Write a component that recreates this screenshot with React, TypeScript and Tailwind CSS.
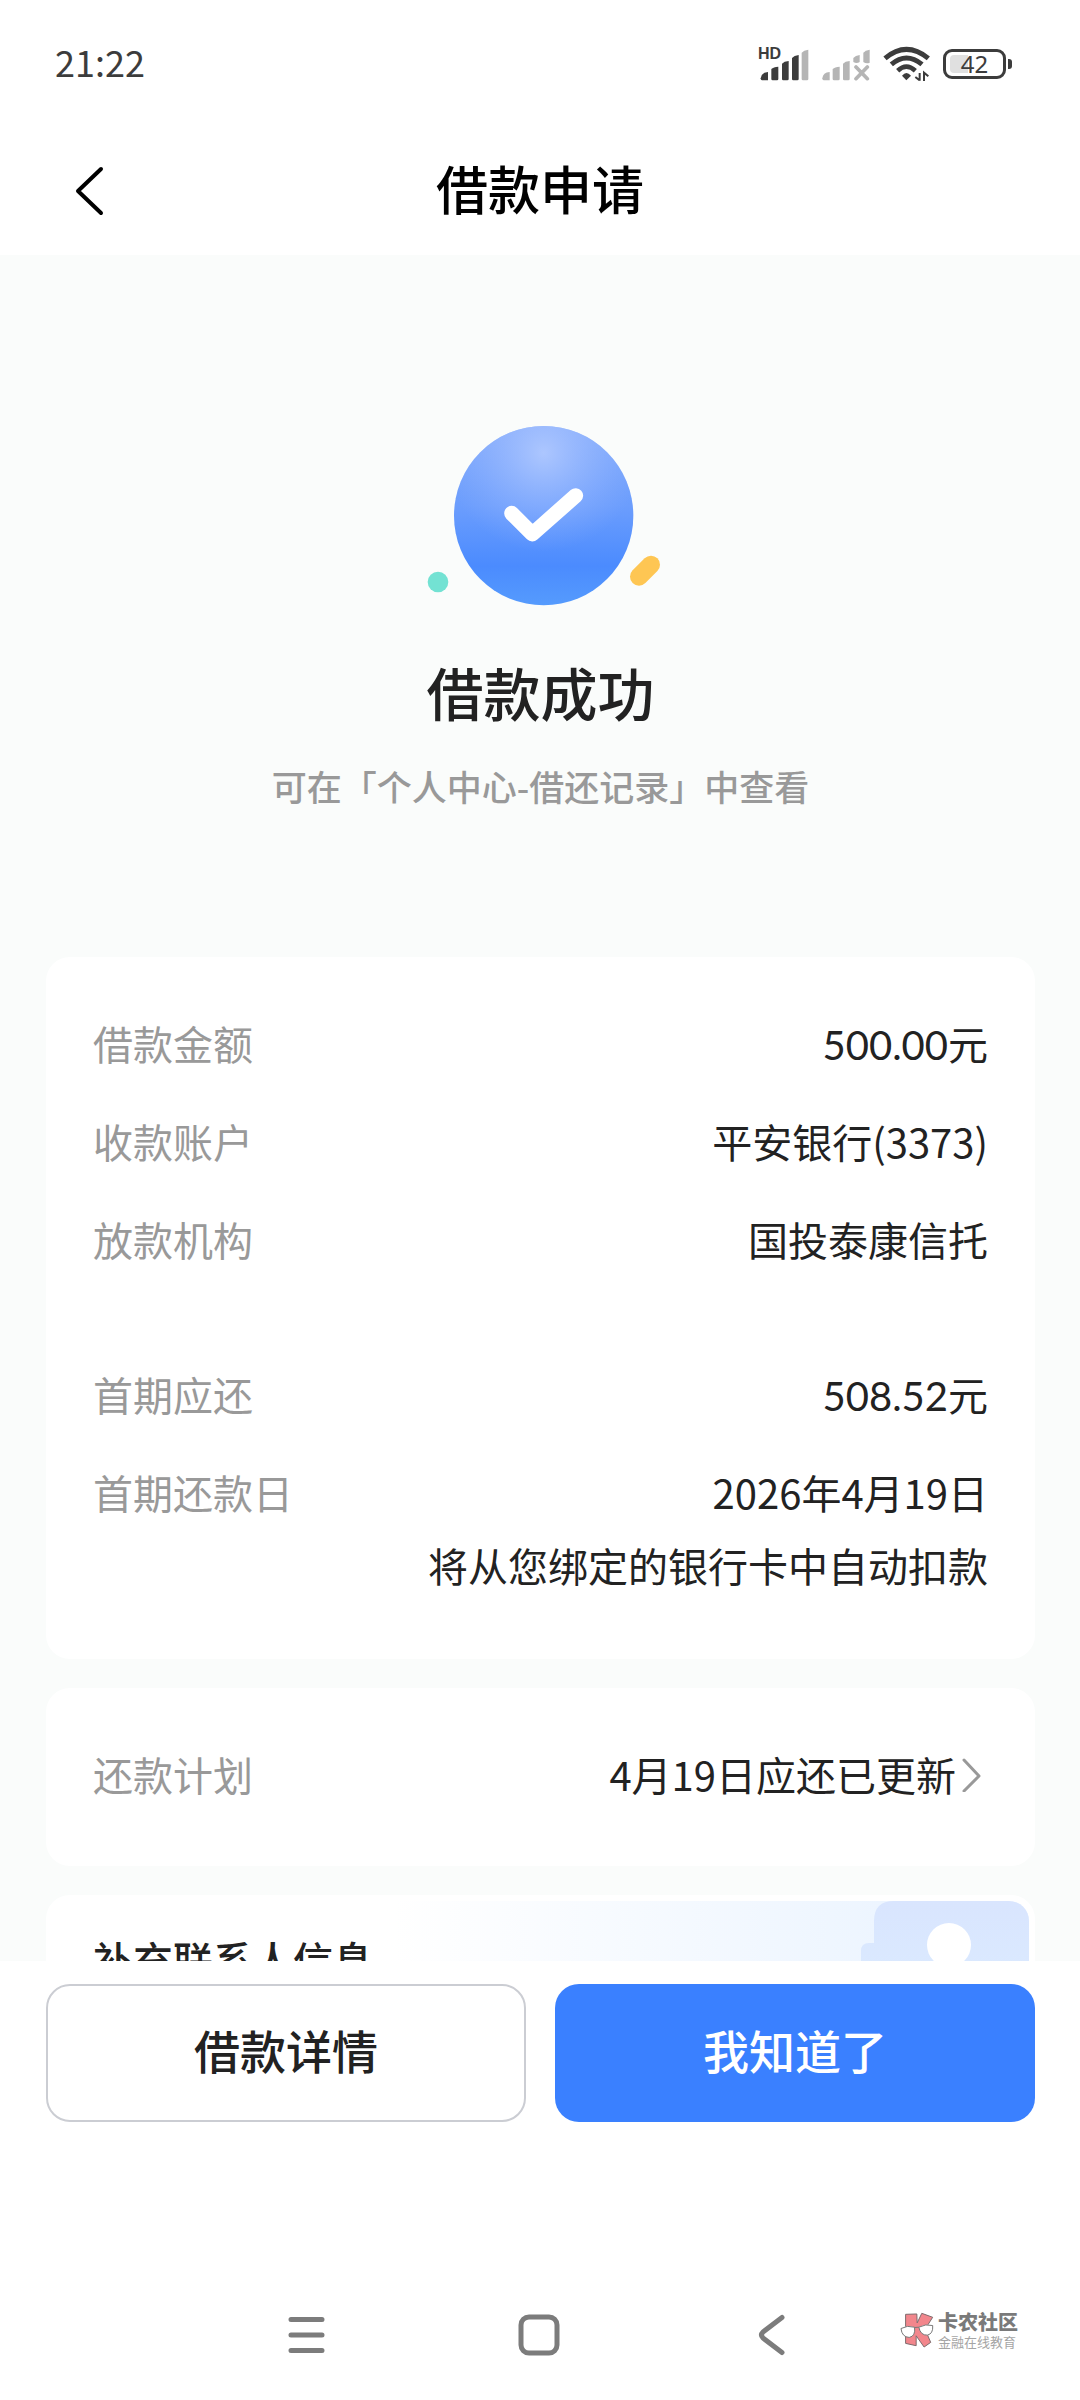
import React from "react";

function SignalIcon() {
  return (
    <div className="relative h-[34px] w-[52px] text-[#3c3c3c]">
      <span className="absolute top-0 left-0 font-['Liberation_Sans'] text-[16px] leading-[14px] font-bold">HD</span>
      <svg viewBox="56 47 156 102" className="h-[34px] w-[52px]" fill="currentColor" aria-hidden="true">
        <path d="M64 141 Q66 123 86 122 V147 H68 Q64 147 64 141Z" />
        <path d="M96 113 Q102 107 117 106 V143 Q117 147 113 147 H100 Q96 147 96 143Z" />
        <path d="M128 97 Q134 90 148 89 V143 Q148 147 144 147 H132 Q128 147 128 143Z" />
        <path d="M158 80 Q164 73 178 71 V143 Q178 147 174 147 H162 Q158 147 158 143Z" />
        <path fill="#b5b5b5" d="M187 64 Q193 57 207 55 V143 Q207 147 203 147 H191 Q187 147 187 143Z" />
      </svg>
    </div>
  );
}

function NoSignalIcon() {
  return (
    <svg viewBox="243 47 147 102" className="h-[34px] w-[49px]" fill="#b5b5b5" aria-hidden="true">
      <path d="M244 141 Q246 123 266 122 V147 H248 Q244 147 244 141Z" />
      <path d="M275 113 Q281 107 296 106 V143 Q296 147 292 147 H279 Q275 147 275 143Z" />
      <path d="M306 97 Q312 90 326 89 V143 Q326 147 322 147 H310 Q306 147 306 143Z" />
      <path d="M337 80 Q343 73 356 71 V92 Q347 98 337 92Z" />
      <path d="M367 64 Q373 57 386 55 V94 Q376 99 367 92Z" />
      <path d="M345 107 L379 142 M379 107 L345 142" stroke="#b5b5b5" strokeWidth="11" strokeLinecap="round" />
    </svg>
  );
}

function WifiIcon() {
  return (
    <svg viewBox="424 47 144 105" className="h-[35px] w-[48px]" fill="none" stroke="#3c3c3c" aria-hidden="true">
      <path d="M430 84 Q494 30 560 84" strokeWidth="15" />
      <path d="M449 102 Q494 64 541 102" strokeWidth="15" />
      <path d="M468 121 Q494 97 521 121" strokeWidth="14" />
      <path d="M481 136 Q494 120 508 136 L494 150Z" fill="#3c3c3c" stroke="none" />
      <path d="M534 128 V151 M521 140 L534 150 M547 153 V127 L560 138" strokeWidth="6" />
    </svg>
  );
}

function BatteryIcon() {
  return (
    <div className="flex items-center gap-[2px]">
      <div className="relative flex h-[30px] w-[63px] items-center justify-center rounded-[9px] border-[3px] border-[#3c3c3c]">
        <span className="absolute inset-y-[3px] left-[4px] w-[18px] rounded-l-[4px] bg-[#e0e0e0]" />
        <span className="relative font-['Noto_Sans'] text-[24px] leading-[24px] text-[#3c3c3c]">42</span>
      </div>
      <span className="h-[10px] w-[4px] rounded-r-[3px] bg-[#3c3c3c]" />
    </div>
  );
}

function SuccessArt() {
  return (
    <svg viewBox="-27 0 900 690" className="h-[230px] w-[300px]" role="img" aria-label="成功">
      <defs>
        <linearGradient id="ball" x1="0" y1="0" x2="0" y2="1">
          <stop offset="0" stopColor="#84abfb" />
          <stop offset="0.45" stopColor="#6b9dfd" />
          <stop offset="0.78" stopColor="#4b8bfe" />
          <stop offset="1" stopColor="#559bfd" />
        </linearGradient>
        <radialGradient id="shine" cx="0.5" cy="0.15" r="0.55">
          <stop offset="0" stopColor="#b2caff" stopOpacity="0.9" />
          <stop offset="1" stopColor="#8fb2ff" stopOpacity="0" />
        </radialGradient>
      </defs>
      <circle cx="431" cy="347" r="269" fill="url(#ball)" />
      <circle cx="431" cy="347" r="269" fill="url(#shine)" />
      <path d="M335 340 L397 402 L527 287" fill="none" stroke="#fff" strokeWidth="45" strokeLinecap="round" strokeLinejoin="round" />
      <circle cx="114" cy="546" r="31" fill="#73e2d3" />
      <path d="M717 530 L753 494" stroke="#fec653" strokeWidth="54" strokeLinecap="round" />
    </svg>
  );
}

function Row({ label, value, amount = false }: { label: string; value: string; amount?: boolean }) {
  return (
    <div className="flex h-[60px] items-baseline justify-between">
      <dt className="text-[#999]">{label}</dt>
      <dd className={amount ? "font-['Lato','Noto_Sans_CJK_SC',sans-serif]" : undefined}>{value}</dd>
    </div>
  );
}

function Watermark() {
  return (
    <div className="absolute top-10 right-[62px] flex items-center gap-[4px]">
      <svg viewBox="58 66 104 112" className="h-[37px] w-[35px]" aria-hidden="true">
        <path
          d="M77 73 L111 72 L112 99 L126 70 L159 82 L136 118 L153 158 L133 172 L109 138 V168 L77 161Z"
          fill="#f2868c"
          stroke="#7c6a6c"
          strokeWidth="3"
          strokeLinejoin="round"
        />
        <g fill="#fff" stroke="#777" strokeWidth="3">
          <path d="M63 116 Q82 105 104 112 Q108 139 88 143 Q66 142 63 116Z" />
          <path d="M117 112 Q138 101 159 107 Q161 132 143 136 Q122 137 117 112Z" />
          <path d="M104 113 L117 112" />
        </g>
      </svg>
      <div className="whitespace-nowrap">
        <div className="text-[20px] leading-[24px] font-black text-[#7a7a7a]">卡农社区</div>
        <div className="text-[13px] leading-[16px] text-[#a5a5a5]">金融在线教育</div>
      </div>
    </div>
  );
}

export default function App() {
  return (
    <div className="flex h-screen flex-col bg-white font-['Noto_Sans_CJK_SC',sans-serif] text-[#222]">
      <div className="flex h-[127px] shrink-0 items-center justify-between pr-[68px] pl-[55px]">
        <span className="pb-1.5 text-[36px] leading-[40px] text-[#3c3c3c]">21:22</span>
        <div className="flex items-center gap-[12px]">
          <SignalIcon />
          <NoSignalIcon />
          <WifiIcon />
          <BatteryIcon />
        </div>
      </div>

      <header className="grid h-32 shrink-0 grid-cols-[1fr_auto_1fr] items-center px-16">
        <button type="button" aria-label="返回" className="w-12">
          <svg viewBox="0 0 48 52" className="h-[52px] w-12" fill="none" stroke="#000" strokeWidth="4" strokeLinecap="round" strokeLinejoin="round">
            <path d="M37 4 L14 26 L37 48" />
          </svg>
        </button>
        <h1 className="pb-1.5 text-[52px] leading-[60px] font-medium text-black">借款申请</h1>
      </header>

      <main className="min-h-0 flex-1 overflow-y-auto bg-[#fafcfb] pr-[45px] pl-[46px] [scrollbar-width:none]">
        <section className="flex flex-col items-center pt-[145px]">
          <SuccessArt />
          <h2 className="mt-[21px] text-[57px] leading-[80px] font-medium">借款成功</h2>
          <p className="mt-[30px] text-[35px] leading-[50px] font-medium text-[#999]">可在「个人中心-借还记录」中查看</p>
        </section>

        <div className="mt-[146px] flex flex-col gap-[29px] text-[40px] leading-[60px]">
          <section className="rounded-[24px] bg-white px-[47px] pt-14 pb-16">
            <dl className="flex flex-col gap-[38px]">
              <Row label="借款金额" value="500.00元" amount />
              <Row label="收款账户" value="平安银行(3373)" />
              <Row label="放款机构" value="国投泰康信托" />
            </dl>
            <dl className="mt-[95px] flex flex-col gap-[38px]">
              <Row label="首期应还" value="508.52元" amount />
              <Row label="首期还款日" value="2026年4月19日" />
            </dl>
            <p className="mt-[13px] text-right">将从您绑定的银行卡中自动扣款</p>
          </section>

          <button type="button" className="flex items-center justify-between rounded-[24px] bg-white px-[47px] pt-14 pb-[62px]">
            <span className="text-[#999]">还款计划</span>
            <span className="flex items-center gap-1">
              4月19日应还已更新
              <svg viewBox="0 0 28 36" className="h-9 w-7" fill="none" stroke="#999" strokeWidth="3" strokeLinecap="round" strokeLinejoin="round">
                <path d="M4 4 L19 20 L4 35" />
              </svg>
            </span>
          </button>

          <section className="rounded-[24px] bg-white p-[6px]">
            <div className="flex items-start justify-between overflow-hidden rounded-[20px] bg-linear-to-r from-white from-35% to-[#edf5ff] to-85% pl-[41px]">
              <h3 className="pt-7 pb-16 font-medium">补充联系人信息</h3>
              <svg viewBox="0 0 168 152" className="h-[152px] w-[168px]" aria-hidden="true">
                <defs>
                  <linearGradient id="book" x1="0" y1="0" x2="0" y2="1">
                    <stop offset="0" stopColor="#d9e5fe" />
                    <stop offset="1" stopColor="#dceeff" />
                  </linearGradient>
                </defs>
                <path d="M13 42 V20 Q13 0 33 0 H168 V152 H0 V50 Q0 42 8 42Z" fill="url(#book)" />
                <circle cx="88" cy="44" r="22" fill="#fff" />
                <path d="M45 110 Q89 62 133 110Z" fill="#fff" />
              </svg>
            </div>
          </section>
        </div>
      </main>

      <footer className="shrink-0">
        <div className="grid grid-cols-2 gap-[29px] pt-[23px] pr-[45px] pl-[46px] text-[46px] leading-[60px] font-medium">
          <button type="button" className="h-[138px] rounded-[24px] border-2 border-[#cbcdd3] bg-white pb-2">
            借款详情
          </button>
          <button type="button" className="h-[138px] rounded-[24px] bg-[#3a80ff] pb-2 text-white">
            我知道了
          </button>
        </div>

        <nav className="relative mt-[148px] flex h-[130px] items-center justify-center gap-40 text-[#7c7c7c]">
          <button type="button" aria-label="最近任务" className="flex w-[72px] justify-center">
            <svg viewBox="0 0 44 44" className="size-11" fill="none" stroke="currentColor" strokeWidth="5" strokeLinecap="round">
              <path d="M5 6.500 H36 M5 22 H36 M5 37.500 H36" />
            </svg>
          </button>
          <button type="button" aria-label="主屏幕" className="flex w-[72px] justify-center">
            <svg viewBox="0 0 44 44" className="size-11" fill="none" stroke="currentColor" strokeWidth="5">
              <rect x="3" y="4" width="36" height="36" rx="8" />
            </svg>
          </button>
          <button type="button" aria-label="返回上一页" className="flex w-[72px] justify-center">
            <svg viewBox="0 0 44 44" className="size-11" fill="none" stroke="currentColor" strokeWidth="5" strokeLinecap="round" strokeLinejoin="round">
              <path d="M32 4.500 L13 19 Q10 22 13 25 L32 39.500" />
            </svg>
          </button>
          <Watermark />
        </nav>
      </footer>
    </div>
  );
}
